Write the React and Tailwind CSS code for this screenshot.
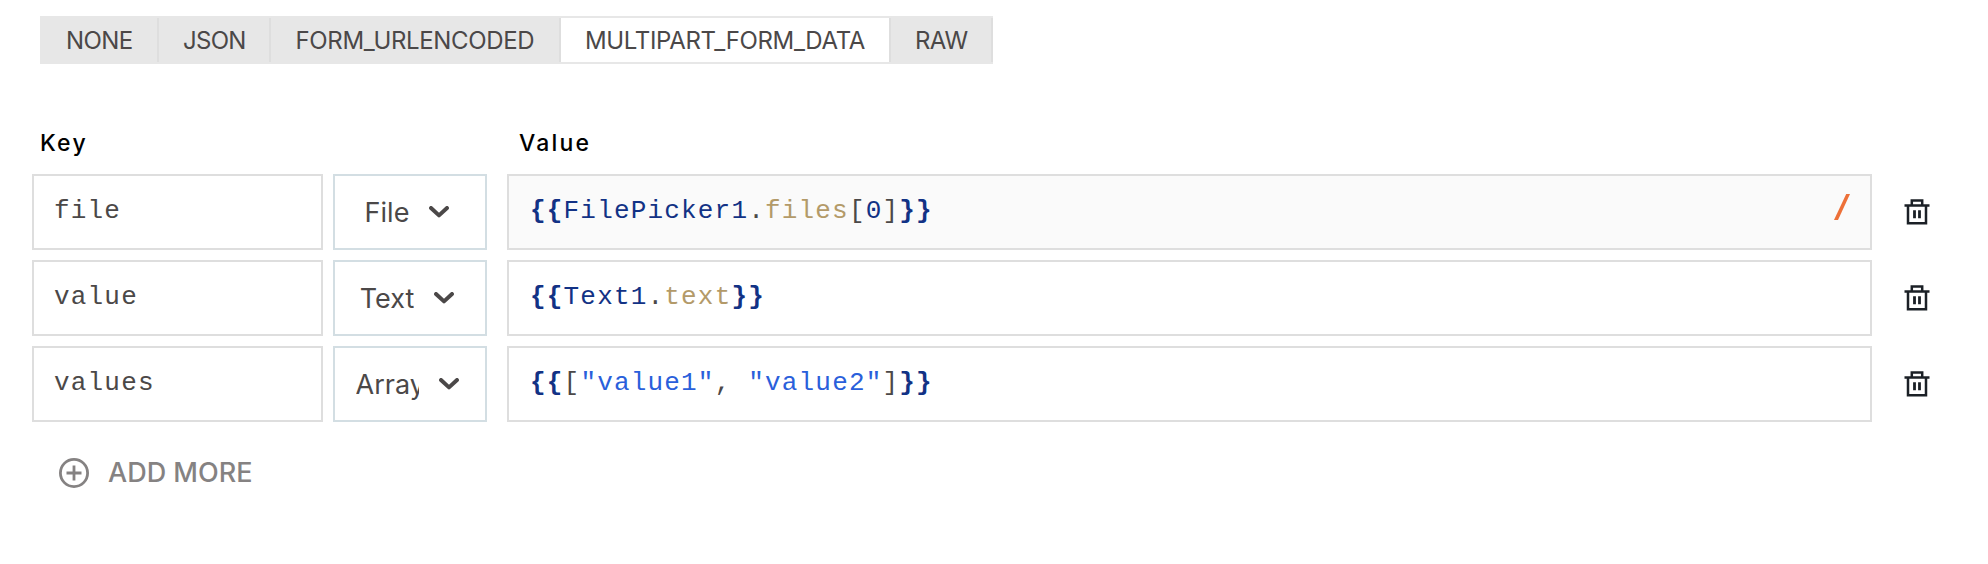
const TABS = [
  { label: "NONE", box: "w-[119px] pl-[26px]", text: "tracking-[-0.6px]" },
  { label: "JSON", box: "w-[112px] pl-[24px]", text: "tracking-[-0.7px]" },
  { label: "FORM_URLENCODED", box: "w-[290px] pl-[24.5px]", text: "tracking-[-0.35px]" },
  { label: "MULTIPART_FORM_DATA", box: "w-[330px] pl-[24px]", text: "tracking-[-0.35px]", active: true },
  { label: "RAW", box: "w-[102px] pl-[24px]", text: "tracking-[-0.6px]" },
];

const COLORS = {
  brace: "font-bold text-[#123285]",
  name: "text-[#123285]",
  plain: "text-[#4b4848]",
  prop: "text-[#b39a69]",
  string: "text-[#2a5fdb]",
};

const ROWS = [
  {
    key: "file",
    type: "File",
    highlighted: true,
    tokens: [["brace", "{{"], ["name", "FilePicker1"], ["plain", "."], ["prop", "files"], ["plain", "["], ["name", "0"], ["plain", "]"], ["brace", "}}"]],
  },
  {
    key: "value",
    type: "Text",
    tokens: [["brace", "{{"], ["name", "Text1"], ["plain", "."], ["prop", "text"], ["brace", "}}"]],
  },
  {
    key: "values",
    type: "Array",
    tokens: [["brace", "{{"], ["plain", "["], ["string", '"value1"'], ["plain", ", "], ["string", '"value2"'], ["plain", "]"], ["brace", "}}"]],
  },
];

function Trash() {
  return (
    <svg className="h-[26px] w-[26px]" viewBox="0 0 26 26" fill="none" stroke="#1b2026" strokeWidth="2">
      <path d="M0.5 6.5H25.5M4 6.5V24.3H22V6.5M7.8 6.5V1.5H18.2V6.5" strokeWidth="2.5" />
      <path d="M10.5 11.3V19.3M15.5 11.3V19.3" strokeWidth="2.8" />
    </svg>
  );
}

function Chevron() {
  return (
    <svg className="h-[12px] w-[20px] shrink-0" viewBox="0 0 20 12" fill="none" stroke="#4b4848" strokeWidth="4" strokeLinecap="round" strokeLinejoin="round">
      <path d="M2 2L10 9.4L18 2" />
    </svg>
  );
}

const MONO = "font-['Liberation_Mono',monospace] text-[26px] leading-8 tracking-[1.18px] whitespace-pre";

function Row({ row }) {
  return (
    <div className="flex h-[76px] items-center">
      <div className={`h-full w-[291px] border-2 border-[#dedede] pt-[19px] pl-[20px] text-[#4b4848] ${MONO}`}>{row.key}</div>
      <div className="ml-[10px] flex h-full w-[154px] items-center justify-center gap-[20px] border-2 border-[#d3dee3] pr-[6px]">
        <span className="max-w-[63px] overflow-hidden pt-[2px] text-[27px] leading-9 text-[#4b4848]">{row.type}</span>
        <Chevron />
      </div>
      <div className={`ml-[20px] flex h-full w-[1365px] justify-between border-2 border-[#dedede] pt-[18px] pr-[20px] pl-[21px] ${row.highlighted ? "bg-[#fafafa]" : "bg-white"}`}>
        <div className={`pt-px ${MONO}`}>
          {row.tokens.map(([kind, text], i) => (
            <span key={i} className={COLORS[kind]}>{text}</span>
          ))}
        </div>
        {row.highlighted && (
          <svg className="h-[26px] w-[16px]" viewBox="0 0 16 26">
            <path d="M12.2 0H16L4 26H0Z" fill="#ed7038" />
          </svg>
        )}
      </div>
      <div className="ml-[32px]"><Trash /></div>
    </div>
  );
}

export default function App() {
  return (
    <div className="h-[564px] w-[1988px] overflow-hidden bg-white font-['Inter',sans-serif]">
      <div className="pt-4 pl-10">
        <div className="flex h-12 w-[953px] border-y-2 border-[#e7e7e7] bg-[#e7e7e7] text-2xl text-[#4b4848]">
          {TABS.map((tab) => (
            <div key={tab.label} className={`flex shrink-0 items-center border-r-2 border-[#dedede] pt-[2px] whitespace-nowrap ${tab.box} ${tab.active ? "bg-white" : ""}`}>
              <span className={tab.text}>{tab.label}</span>
            </div>
          ))}
        </div>
      </div>
      <div className="mt-[63px] flex h-8 pl-10 text-[23px] leading-8 font-medium text-black">
        <div className="w-[479px] tracking-[2.2px]">Key</div>
        <div className="tracking-[2.2px]">Value</div>
      </div>
      <div className="mt-[15px] flex flex-col gap-[10px] pl-8">
        {ROWS.map((row) => <Row key={row.key} row={row} />)}
      </div>
      <div className="mt-[35px] flex items-center gap-[19px] pl-[59px]">
        <svg className="h-[30px] w-[30px]" viewBox="0 0 30 30" fill="none" stroke="#858282" strokeWidth="2.8">
          <circle cx="15" cy="15" r="13.6" />
          <path d="M7.5 15H22.5M15 7.5V22.5" />
        </svg>
        <span className="pt-px text-[27px] leading-[30px] font-medium tracking-[0px] text-[#858282]">ADD MORE</span>
      </div>
    </div>
  );
}
